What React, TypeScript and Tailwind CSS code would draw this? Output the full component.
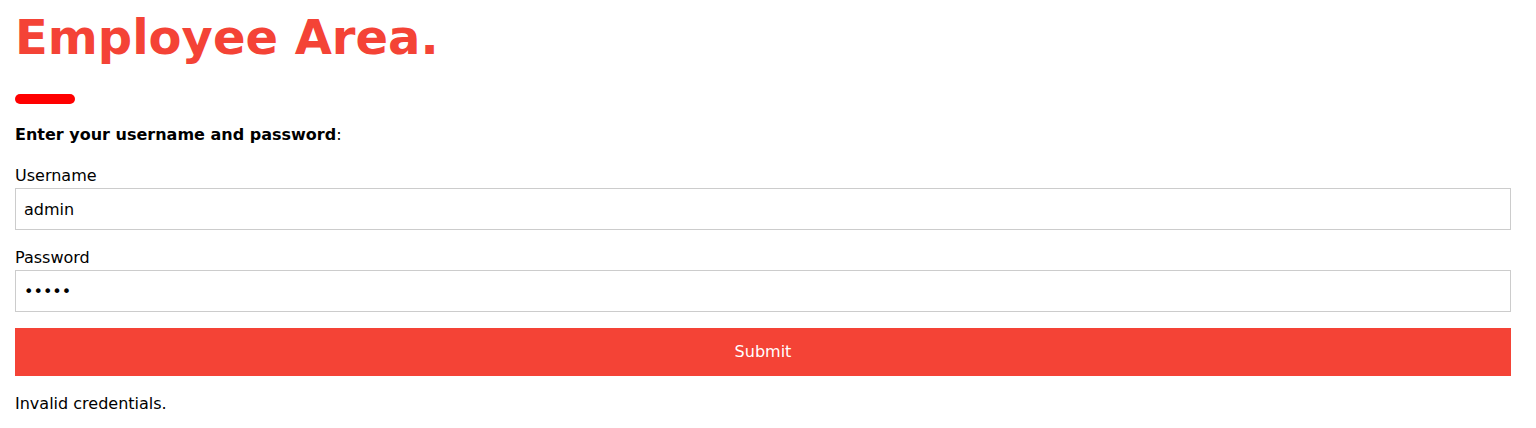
import React from "react";

export default function App() {
  return (
    <div className="bg-white min-h-[428px] pl-[15px] pr-[25px] text-black" style={{ fontFamily: '"DejaVu Sans", sans-serif' }}>
      <h1 className="text-[48px] font-bold leading-[56px] text-[#f44336] pt-[9px]">Employee Area.</h1>
      <div className="mt-[29px] h-[10px] w-[60px] rounded-[5px] bg-[#ff0000]"></div>
      <p className="mt-[21px] text-[16px] leading-[20px]">
        <b>Enter your username and password</b>:
      </p>
      <div className="mt-[21px] text-[16px] leading-[20px]">Username</div>
      <input
        className="mt-[2px] block w-full h-[42px] border border-[#cccccc] px-[8px] text-[16px] outline-none"
        defaultValue="admin"
        style={{ fontFamily: '"DejaVu Sans", sans-serif' }}
      />
      <div className="mt-[18px] text-[16px] leading-[20px]">Password</div>
      <input
        type="password"
        className="mt-[2px] block w-full h-[42px] border border-[#cccccc] px-[8px] text-[16px] outline-none"
        defaultValue="admin"
        style={{ fontFamily: '"DejaVu Sans", sans-serif' }}
      />
      <button className="mt-[16px] block w-full h-[48px] bg-[#f44336] text-white text-[16px]" style={{ fontFamily: '"DejaVu Sans", sans-serif' }}>
        Submit
      </button>
      <p className="mt-[18px] text-[16px] leading-[20px]">Invalid credentials.</p>
    </div>
  );
}
